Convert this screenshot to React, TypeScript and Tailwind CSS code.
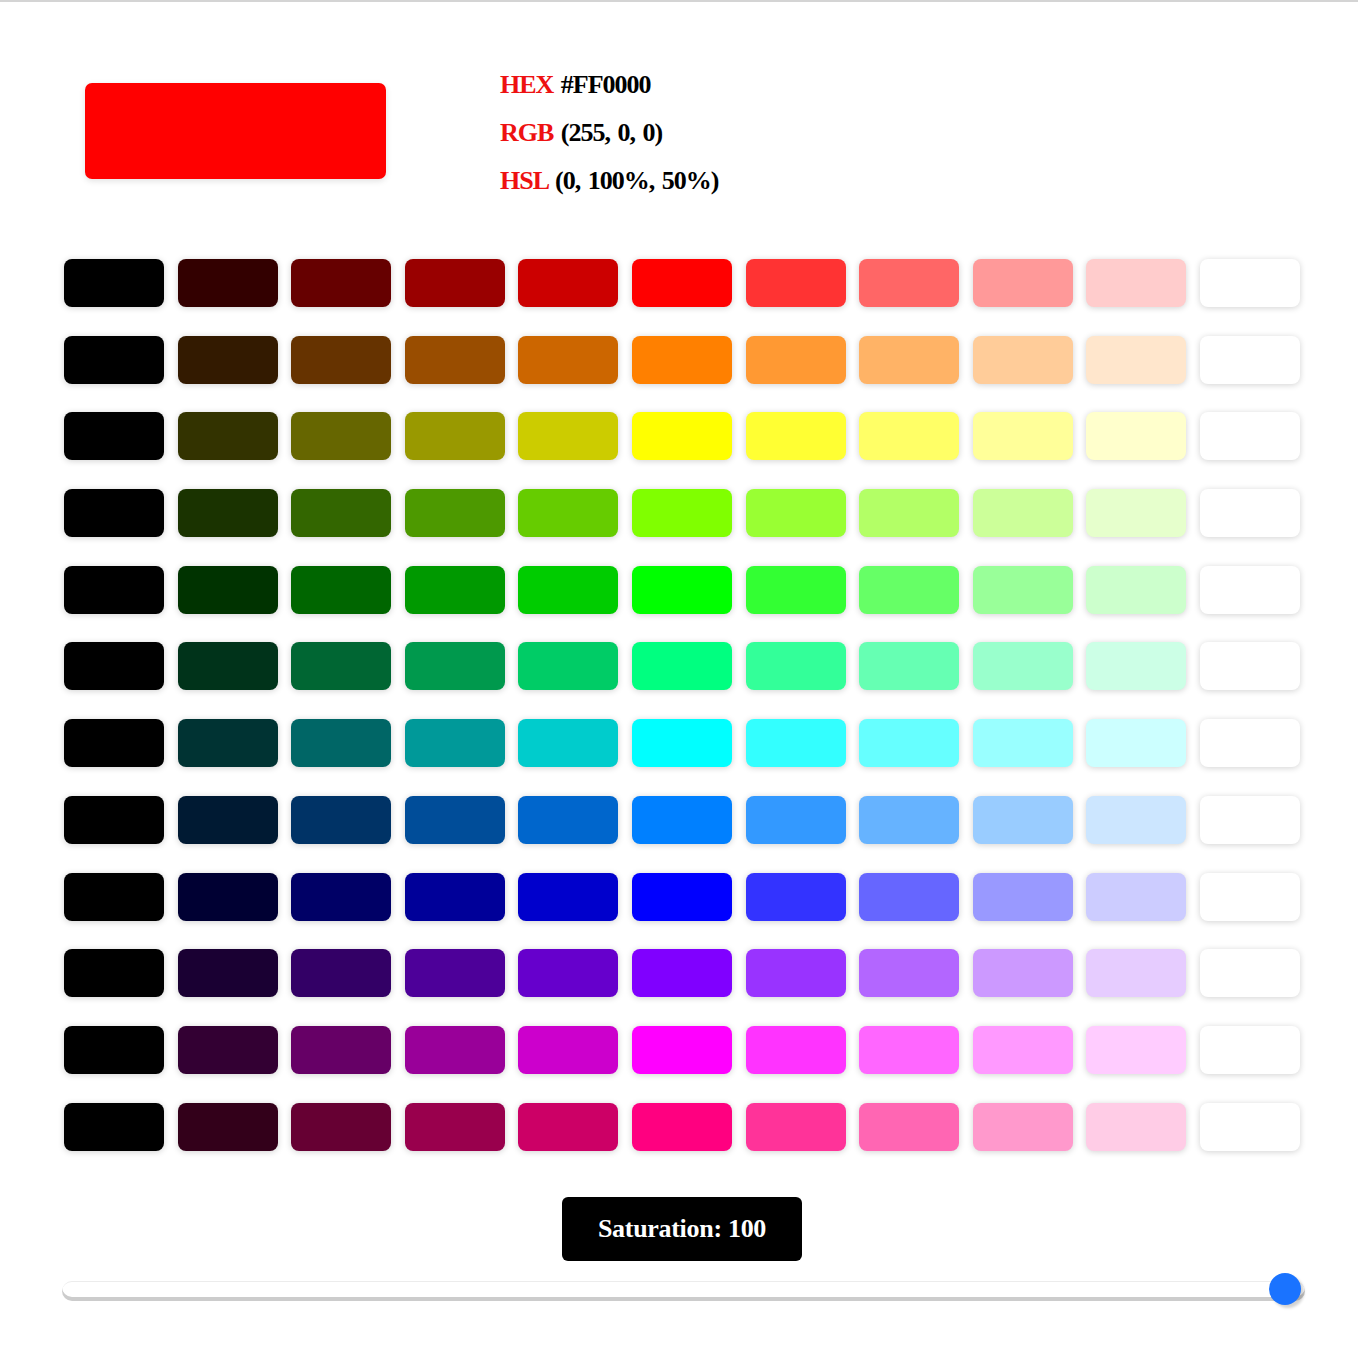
import React from 'react';

const hues = [0, 30, 60, 90, 120, 150, 180, 210, 240, 270, 300, 330];
const lights = [0, 10, 20, 30, 40, 50, 60, 70, 80, 90, 100];

export default function App() {
  const saturation = 100;

  return (
    <div className="min-h-[1355px] w-[1358px] bg-white border-t-2 border-[#d4d4d4] font-['Liberation_Serif',serif]">
      {/* Top: preview + values */}
      <div className="flex items-start pt-[57px]">
        <div className="ml-[85px] mt-[24px] h-[96px] w-[301px] rounded-[7px] bg-[#ff0000] shadow-[0_2px_6px_rgba(0,0,0,0.12)]" />
        <div className="ml-[114px] mt-[2px] -mb-[2px] flex flex-col text-[26px] font-bold leading-[48px] tracking-[-1px] [word-spacing:2px] text-black">
          <div>
            <span className="text-[#ee1111]">HEX</span> #FF0000
          </div>
          <div>
            <span className="text-[#ee1111]">RGB</span> (255, 0, 0)
          </div>
          <div>
            <span className="text-[#ee1111]">HSL</span> (0, 100%, 50%)
          </div>
        </div>
      </div>

      {/* Palette grid */}
      <div className="ml-[64px] mt-[56px] grid w-[1236px] grid-cols-11 gap-x-[13.6px] gap-y-[28.7px]">
        {hues.map((h) =>
          lights.map((l) => (
            <div
              key={`${h}-${l}`}
              className="h-[48px] w-[100px] rounded-[8px] shadow-[0_1px_6px_rgba(0,0,0,0.18)]"
              style={{ backgroundColor: `hsl(${h}, ${saturation}%, ${l}%)` }}
            />
          ))
        )}
      </div>

      {/* Saturation label */}
      <div className="mt-[46px] flex justify-center pl-[6px]">
        <div className="flex h-[64px] w-[240px] items-center justify-center rounded-[6px] bg-black text-[26px] font-bold tracking-[-0.3px] text-white">
          Saturation: {saturation}
        </div>
      </div>

      {/* Slider */}
      <div className="relative ml-[62px] mt-[20px] h-[20px] w-[1243px]">
        <div className="absolute inset-0 rounded-full border-t border-[#ececec] bg-white shadow-[inset_0_-4px_0_#cccccc]" />
        <div className="absolute left-[1207px] top-[-8px] h-[32px] w-[32px] rounded-full bg-[#1a73ff] shadow-[3px_3px_3px_rgba(0,0,0,0.18)]" />
      </div>
    </div>
  );
}
